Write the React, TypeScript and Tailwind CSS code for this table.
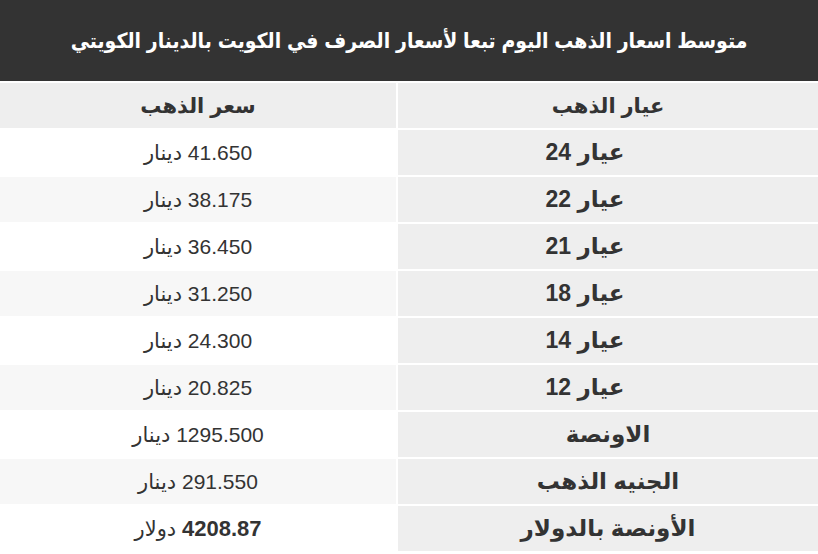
import React from 'react'

const rows: { label: React.ReactNode; price: React.ReactNode; shift?: boolean }[] = [
  { label: <>عيار <b>24</b></>, price: '41.650 دينار', shift: true },
  { label: <>عيار <b>22</b></>, price: '38.175 دينار', shift: true },
  { label: <>عيار <b>21</b></>, price: '36.450 دينار', shift: true },
  { label: <>عيار <b>18</b></>, price: '31.250 دينار', shift: true },
  { label: <>عيار <b>14</b></>, price: '24.300 دينار', shift: true },
  { label: <>عيار <b>12</b></>, price: '20.825 دينار', shift: true },
  { label: 'الاونصة', price: '1295.500 دينار' },
  { label: 'الجنيه الذهب', price: '291.550 دينار' },
  { label: 'الأونصة بالدولار', price: <><b className="text-[22px]">4208.87</b> دولار</> },
]

export default function App() {
  return (
    <div
      dir="rtl"
      className="w-[818px] h-[554px] overflow-hidden bg-white text-[#333]"
      style={{ fontFamily: '"Liberation Sans", "DejaVu Sans", sans-serif' }}
    >
      <div className="h-[81px] bg-[#333333] flex items-center justify-center">
        <h1
          className="text-white font-bold text-[21px]"
          style={{ fontFamily: '"Liberation Sans", "DejaVu Sans Condensed", "DejaVu Sans", sans-serif' }}
        >
          متوسط اسعار الذهب اليوم تبعا لأسعار الصرف في الكويت بالدينار الكويتي
        </h1>
      </div>

      <div className="grid grid-cols-[420px_1fr] gap-[2px] pt-[2px]">
        {/* header row */}
        <div className="h-[45px] bg-[#eeeeee] flex items-center justify-center font-bold text-[21px]">
          عيار الذهب
        </div>
        <div className="h-[45px] bg-[#eeeeee] flex items-center justify-center font-bold text-[21px]">
          سعر الذهب
        </div>

        {rows.map((r, i) => (
          <React.Fragment key={i}>
            <div
              className={
                'h-[45px] bg-[#eeeeee] flex items-center justify-center font-bold text-[23px] ' +
                (r.shift ? 'pr-[46px]' : '')
              }
            >
              <span>{r.label}</span>
            </div>
            <div
              className={
                'h-[45px] flex items-center justify-center text-[21px] ' +
                (i % 2 === 0 ? 'bg-white' : 'bg-[#f7f7f7]')
              }
            >
              <span>{r.price}</span>
            </div>
          </React.Fragment>
        ))}
      </div>
    </div>
  )
}
